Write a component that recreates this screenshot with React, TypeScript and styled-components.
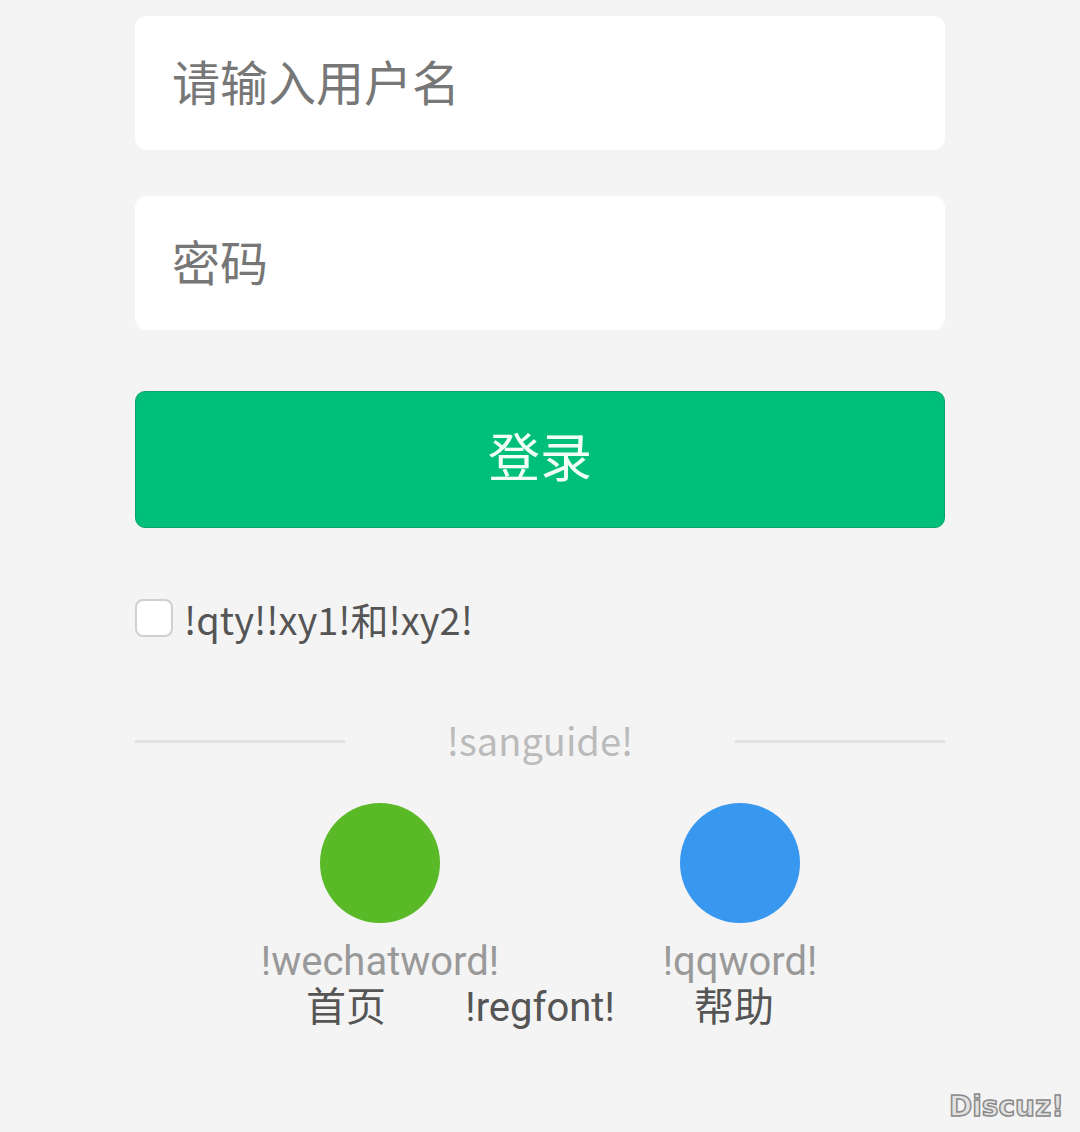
import React from "react";
import styled, { createGlobalStyle } from "styled-components";

const GlobalStyle = createGlobalStyle`
	html, body {
		margin: 0;
		padding: 0;
		background: #f4f4f4;
	}
	body {
		min-height: 1132px;
		font-family: "Noto Sans CJK SC", "Noto Sans", sans-serif;
	}
`;

const Page = styled.div`
	position: relative;
	min-height: 1132px;
	padding-top: 16px;
	box-sizing: border-box;
`;

const Form = styled.form`
	width: 810px;
	margin: 0 auto;
	display: flex;
	flex-direction: column;
`;

const Field = styled.input`
	height: 134px;
	box-sizing: border-box;
	border: none;
	outline: none;
	border-radius: 12px;
	background: #fff;
	padding: 0 0 6px 37px;
	margin-bottom: 46px;
	font-family: inherit;
	font-size: 48px;
	color: #333;
	&::placeholder {
		color: #777;
	}
`;

const SubmitButton = styled.button`
	margin-top: 15px;
	height: 137px;
	padding: 0 0 10px;
	border: 1px solid #0aa56c;
	border-radius: 10px;
	background: #00bf7a;
	color: #f2fff9;
	font-family: inherit;
	font-size: 52px;
	cursor: pointer;
`;

const AgreeRow = styled.label`
	margin-top: 70px;
	display: flex;
	align-items: center;
	gap: 11px;
	font-size: 38px;
	color: #555;
	height: 40px;
`;

const CheckBox = styled.span`
	width: 34px;
	height: 34px;
	border: 2px solid #d0d0d0;
	border-radius: 8px;
	background: #fff;
	flex-shrink: 0;
`;

const Divider = styled.div`
	margin-top: 74px;
	display: flex;
	align-items: center;
	justify-content: space-between;
	font-size: 38px;
	color: #bbb;
	&::before,
	&::after {
		content: "";
		width: 210px;
		height: 3px;
		margin-top: 3px;
		background: #e2e2e2;
	}
`;

const Socials = styled.div`
	margin-top: 36px;
	padding-left: 40px;
	display: flex;
	justify-content: center;
`;

const Social = styled.a`
	width: 360px;
	display: flex;
	flex-direction: column;
	align-items: center;
	text-decoration: none;
`;

const Circle = styled.span<{ $color: string }>`
	width: 120px;
	height: 120px;
	border-radius: 50%;
	background: ${p => p.$color};
`;

const SocialLabel = styled.span`
	margin-top: 16px;
	font-family: Roboto, "Noto Sans CJK SC", sans-serif;
	font-size: 40px;
	line-height: 46px;
	color: #999;
`;

const Links = styled.div`
	display: flex;
	justify-content: center;
`;

const NavLink = styled.a`
	width: 194px;
	text-align: center;
	font-family: Roboto, "Noto Sans CJK SC", sans-serif;
	font-size: 40px;
	line-height: 46px;
	color: #555;
	text-decoration: none;
`;

const Watermark = styled.div`
	position: absolute;
	right: 16px;
	bottom: 9px;
	font-family: "DejaVu Sans", sans-serif;
	font-weight: bold;
	font-size: 28px;
	color: #e2e2e2;
	-webkit-text-stroke: 1.5px #8a8a8a;
`;

export default function App() {
	return (
		<Page>
			<GlobalStyle />
			<Form onSubmit={e => e.preventDefault()}>
				<Field type="text" placeholder="请输入用户名" />
				<Field type="password" placeholder="密码" />
				<SubmitButton type="submit">登录</SubmitButton>
				<AgreeRow>
					<CheckBox />
					!qty!!xy1!和!xy2!
				</AgreeRow>
				<Divider>!sanguide!</Divider>
				<Socials>
					<Social href="#">
						<Circle $color="#59b926" />
						<SocialLabel>!wechatword!</SocialLabel>
					</Social>
					<Social href="#">
						<Circle $color="#3897ef" />
						<SocialLabel>!qqword!</SocialLabel>
					</Social>
				</Socials>
				<Links>
					<NavLink href="#">首页</NavLink>
					<NavLink href="#">!regfont!</NavLink>
					<NavLink href="#">帮助</NavLink>
				</Links>
			</Form>
			<Watermark>Discuz!</Watermark>
		</Page>
	);
}
